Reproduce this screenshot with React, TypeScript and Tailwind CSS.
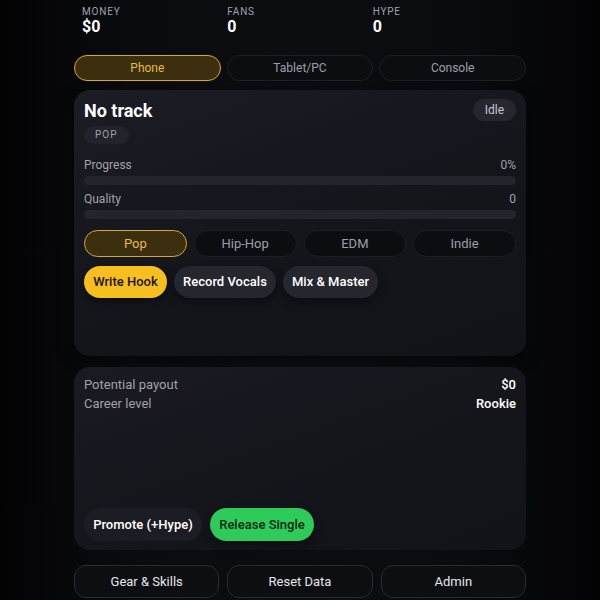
const font = "font-['Roboto','Liberation_Sans',sans-serif]";
// medium weight: try the named face first, then Roboto at 500
const medium = "font-['Roboto_Medium','Roboto',sans-serif] font-medium";

const stats = [
  { label: "MONEY", value: "$0" },
  { label: "FANS", value: "0" },
  { label: "HYPE", value: "0" },
];

const platforms = ["Phone", "Tablet/PC", "Console"];
const genres = ["Pop", "Hip-Hop", "EDM", "Indie"];

const activeGold = "border border-[#d9a92c] bg-[#3b2f10] text-[#e6b94a]";
const idlePill = "border border-[#1c1e24] bg-[#0c0d11] text-[#9aa0aa]";

const StatRow = () => (
  <div className="flex px-2">
    {stats.map((s) => (
      <div key={s.label} className="w-[148px]">
        <div className="text-[10px] leading-[12px] tracking-[0.08em] text-[#9ca3af]">{s.label}</div>
        <div className="text-[16px] font-bold leading-[18px] text-white">{s.value}</div>
      </div>
    ))}
  </div>
);

const ProgressRow = ({ label, value }: { label: string; value: string }) => (
  <>
    <div className="flex justify-between text-[12px] leading-[16px] text-[#a1a1aa]">
      <span>{label}</span>
      <span>{value}</span>
    </div>
    <div className="mt-[3px] h-[9px] rounded-full bg-[#23252c]" />
  </>
);

const App = () => (
  <div
    className={`${font} min-h-screen bg-[linear-gradient(90deg,#030304,#0a0b0f_22%,#0c0d11_50%,#0a0b0f_78%,#030304)]`}
  >
    <div className="mx-auto w-[452px] pt-[6px]">
      <StatRow />

      {/* platform tabs */}
      <div className="mt-[19px] flex gap-[6px]">
        {platforms.map((p, i) => (
          <button
            key={p}
            className={`h-[26px] flex-1 rounded-full text-[12px] ${i === 0 ? activeGold : idlePill}`}
          >
            {p}
          </button>
        ))}
      </div>

      {/* track card */}
      <div className="mt-[9px] h-[266px] rounded-[16px] bg-[linear-gradient(160deg,#1b1c24,#14151b_60%,#121319)] p-[10px] shadow-[0_4px_16px_rgba(0,0,0,0.5)]">
        <div className="flex items-start justify-between">
          <div>
            <div className="text-[18px] font-bold leading-[21px] text-white">No track</div>
            <div className="inline-flex h-[18px] items-center rounded-full bg-[#23242b] px-[11px] text-[10px] tracking-[0.1em] text-[#9ca3af]">
              POP
            </div>
          </div>
          <div className="-mt-px flex h-[22px] items-center rounded-full bg-[#25262e] px-[12px] text-[12px] text-[#c4c8d0]">
            Idle
          </div>
        </div>

        <div className="mt-[12px]">
          <ProgressRow label="Progress" value="0%" />
        </div>
        <div className="mt-[6px]">
          <ProgressRow label="Quality" value="0" />
        </div>

        <div className="mt-[11px] grid grid-cols-4 gap-[7px]">
          {genres.map((g, i) => (
            <button
              key={g}
              className={`h-[27px] rounded-full text-[13px] ${i === 0 ? activeGold : idlePill}`}
            >
              {g}
            </button>
          ))}
        </div>

        <div className="mt-[9px] flex gap-[7px]">
          <button className={`${medium} h-[32px] w-[83px] rounded-full bg-[#f6be1f] text-[13px] text-[#1a1406] shadow-[0_4px_10px_rgba(0,0,0,0.4)]`}>
            Write Hook
          </button>
          <button className={`${medium} h-[32px] w-[102px] rounded-full bg-[#25262e] text-[13px] text-white shadow-[0_4px_10px_rgba(0,0,0,0.4)]`}>
            Record Vocals
          </button>
          <button className={`${medium} h-[32px] w-[95px] rounded-full bg-[#25262e] text-[13px] text-white shadow-[0_4px_10px_rgba(0,0,0,0.4)]`}>
            Mix &amp; Master
          </button>
        </div>
      </div>

      {/* payout card */}
      <div className="mt-[11px] flex h-[183px] flex-col justify-between rounded-[16px] bg-[linear-gradient(160deg,#1a1b22,#14151b_60%,#121319)] px-[10px] pb-[9px] pt-[8px]">
        <div className="text-[13px] leading-[19px]">
          <div className="flex justify-between">
            <span className="text-[#a1a1aa]">Potential payout</span>
            <span className={`${medium} text-white`}>$0</span>
          </div>
          <div className="flex justify-between">
            <span className="text-[#a1a1aa]">Career level</span>
            <span className={`${medium} text-white`}>Rookie</span>
          </div>
        </div>
        <div className="flex gap-[8px]">
          <button className={`${medium} h-[33px] w-[118px] rounded-full bg-[#1c1d24] text-[13px] text-white`}>
            Promote (+Hype)
          </button>
          <button className={`${medium} h-[33px] w-[104px] rounded-full bg-[#2fcb5a] text-[13px] text-[#072a12] shadow-[0_4px_10px_rgba(0,0,0,0.4)]`}>
            Release Single
          </button>
        </div>
      </div>

      {/* footer buttons */}
      <div className="mt-[15px] grid grid-cols-3 gap-[8px]">
        {["Gear & Skills", "Reset Data", "Admin"].map((b) => (
          <button
            key={b}
            className="h-[33px] rounded-[12px] border border-[#2a2b31] bg-[#0d0e12] text-[13px] text-[#e5e7eb]"
          >
            {b}
          </button>
        ))}
      </div>
    </div>
  </div>
);

export default App;
